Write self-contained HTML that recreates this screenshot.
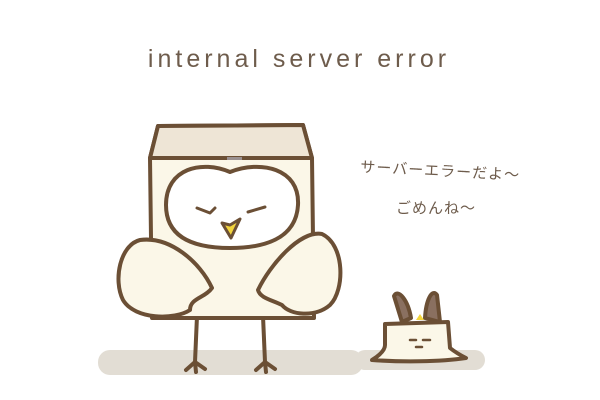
<!DOCTYPE html><html><head><meta charset="utf-8"><style>
html,body{margin:0;padding:0;background:#fff;width:600px;height:400px;overflow:hidden}
svg{display:block}
</style></head><body>
<svg width="600" height="400" viewBox="0 0 600 400" xmlns="http://www.w3.org/2000/svg">
<text x="299" y="67" text-anchor="middle" font-family="Liberation Sans, sans-serif" font-size="25" fill="#6e5c4c" letter-spacing="4">internal server error</text>
<text x="440" y="176" text-anchor="middle" font-family="Liberation Sans, 'Noto Sans CJK JP', sans-serif" font-size="15" fill="#6e5c4c" transform="rotate(3 440 176)" letter-spacing="1">サーバーエラーだよ～</text>
<text x="436" y="213" text-anchor="middle" font-family="Liberation Sans, 'Noto Sans CJK JP', sans-serif" font-size="15" fill="#6e5c4c" letter-spacing="1">ごめんね～</text>
<!-- shadows -->
<rect x="98" y="350" width="265" height="25" rx="12" fill="#e2ddd4"/>
<rect x="355" y="350" width="130" height="20" rx="10" fill="#e2ddd4"/>
<g stroke="#6b4f35" stroke-width="4" stroke-linecap="round" stroke-linejoin="round">
<path d="M197 316 L195 362 M195 362 L186 370 M195 362 L196 372 M195 362 L205 369" fill="none"/>
<path d="M263 316 L265 362 M265 362 L256 370 M265 362 L266 372 M265 362 L275 369" fill="none"/>
<path d="M158 126 L303 125 L312 158 L314 318 L152 318 L150 158 Z" fill="#fbf7e8"/>
<path d="M158 126 L303 125 L312 158 L150 158 Z" fill="#eee5d6"/>
<path d="M230 172 C260 160 300 168 298 205 C296 240 262 248 230 248 C198 248 166 240 166 205 C166 168 202 160 230 172 Z" fill="#fff"/>
<path d="M140 240 C170 236 200 262 212 288 C205 298 190 298 190 310 C175 320 135 320 123 300 C113 280 120 245 140 240 Z" fill="#fbf7e8"/>
<path d="M322 234 C345 245 345 290 330 305 C315 318 290 315 282 305 C272 300 260 298 258 290 C270 265 300 230 322 234 Z" fill="#fbf7e8"/>
<path d="M197 208 L210 213 L215 208 M248 212 L265 207" fill="none" stroke-width="3"/>
<path d="M222 223 L231 238 L240 219 L230 225 Z" fill="#f2d43c" stroke-width="3"/>
<path d="M402 322 L394 296 C398 288 408 300 411 318 Z" fill="#8a7060"/>
<path d="M425 318 C426 300 432 288 437 295 L440 322 Z" fill="#8a7060"/>
<path d="M385 324 L448 322 L450 348 C455 352 462 356 466 358 C440 362 400 362 372 360 C380 355 385 350 385 345 Z" fill="#fbf7e8"/>
<path d="M410 340 L416 340 M423 340 L430 340 M416 347 L422 347" stroke-width="2.5" fill="none"/>
</g>
<rect x="227" y="157" width="15" height="3" fill="#9a9090"/>
<path d="M416 320 L420 314 L424 320 Z" fill="#f2d43c"/>
</svg>
</body></html>
